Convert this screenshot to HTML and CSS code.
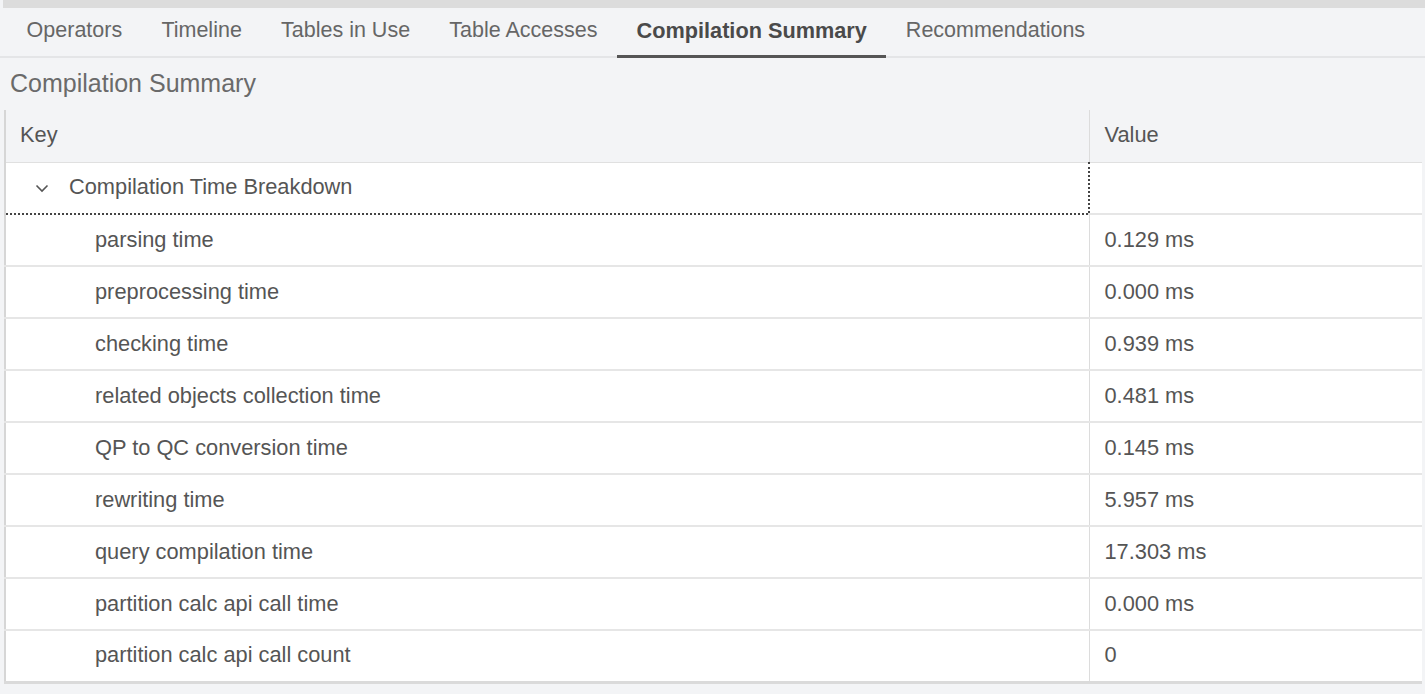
FILE: index.html
```html
<!DOCTYPE html>
<html>
<head>
<meta charset="utf-8">
<link rel="stylesheet" href="styles.css">
</head>
<body>
<div class="topstrip"></div>
<nav class="tabs">
  <div class="tab">Operators</div>
  <div class="tab">Timeline</div>
  <div class="tab">Tables in Use</div>
  <div class="tab">Table Accesses</div>
  <div class="tab active">Compilation Summary</div>
  <div class="tab">Recommendations</div>
</nav>
<div class="section-title">Compilation Summary</div>
<div class="grid-wrap">
<table class="grid">
  <colgroup><col class="c-key"><col class="c-val"></colgroup>
  <thead>
    <tr><th>Key</th><th class="val">Value</th></tr>
  </thead>
  <tbody>
    <tr class="group">
      <td class="focus"><span class="chev"><svg width="14" height="10" viewBox="0 0 14 10"><path d="M1.5 2.5 L7 8 L12.5 2.5" fill="none" stroke="#555" stroke-width="1.6"/></svg></span>Compilation Time Breakdown</td>
      <td class="val"></td>
    </tr>
    <tr><td class="child">parsing time</td><td class="val">0.129 ms</td></tr>
    <tr><td class="child">preprocessing time</td><td class="val">0.000 ms</td></tr>
    <tr><td class="child">checking time</td><td class="val">0.939 ms</td></tr>
    <tr><td class="child">related objects collection time</td><td class="val">0.481 ms</td></tr>
    <tr><td class="child">QP to QC conversion time</td><td class="val">0.145 ms</td></tr>
    <tr><td class="child">rewriting time</td><td class="val">5.957 ms</td></tr>
    <tr><td class="child">query compilation time</td><td class="val">17.303 ms</td></tr>
    <tr><td class="child">partition calc api call time</td><td class="val">0.000 ms</td></tr>
    <tr><td class="child">partition calc api call count</td><td class="val">0</td></tr>
  </tbody>
</table>
</div>
</body>
</html>
```

FILE: styles.css
```css
* { box-sizing: border-box; }
html, body {
  margin: 0;
  padding: 0;
  background: #f3f4f6;
  font-family: "Liberation Sans", Arial, sans-serif;
  color: #555;
}
.topstrip {
  height: 8px;
  margin-left: 3px;
  background: #dcdcdc;
}
.tabs {
  display: flex;
  height: 50px;
  padding-left: 7px;
  border-bottom: 2px solid #e4e5e7;
  background: #f3f4f6;
}
.tab {
  padding: 0 19.6px;
  font-size: 21.5px;
  line-height: 45px;
  color: #666;
  border-bottom: 3px solid transparent;
  margin-bottom: -2px;
}
.tab.active {
  color: #4a4a4a;
  font-weight: bold;
  font-size: 21.7px;
  padding: 0 19.5px;
  border-bottom-color: #555;
}
.section-title {
  height: 52px;
  padding-left: 10px;
  font-size: 25px;
  line-height: 51px;
  color: #6a6a6a;
}
.grid-wrap {
  padding-left: 4px;
  padding-right: 3px;
}
.grid {
  width: 100%;
  border-collapse: collapse;
  border-left: 2px solid #d6d6d6;
  border-bottom: 3px solid #dadada;
  background: #fff;
  font-size: 21.8px;
}
.c-key { width: 1084px; }
.grid th, .grid td {
  height: 52px;
  padding: 0 0 1px 14px;
  text-align: left;
  font-weight: normal;
  color: #555;
  border-bottom: 2px solid #e6e6e6;
  white-space: nowrap;
}
.grid th {
  background: #f3f4f6;
  border-bottom: 1px solid #e0e0e0;
}
.grid th.val, .grid td.val {
  border-left: 1px solid #dcdcdc;
  padding-left: 15px;
}
.grid tbody tr:last-child td { border-bottom: none; }
.grid td.child { padding-left: 89px; }
.group td.focus {
  padding-left: 29px;
  border-bottom: 2px dotted #444;
  border-right: 2px dotted #444;
}
.group td.val { border-left: none; }
.chev {
  display: inline-block;
  width: 34px;
  vertical-align: 1px;
}
.chev svg { display: block; }
```
